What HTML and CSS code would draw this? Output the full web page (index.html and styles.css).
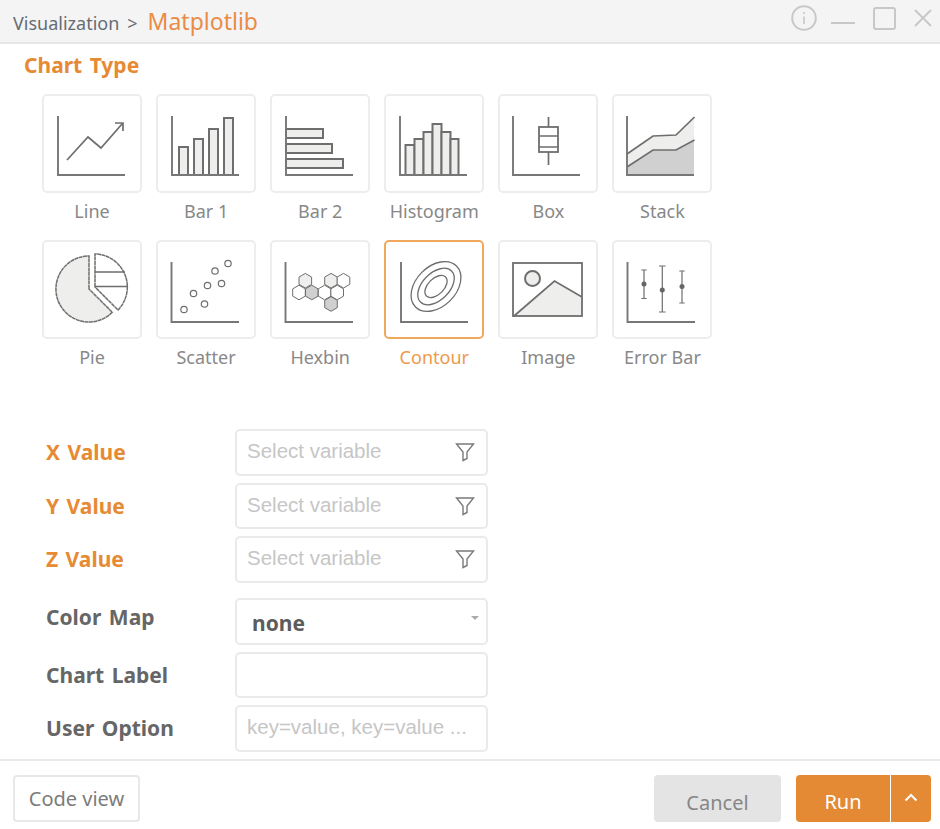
FILE: index.html
```html
<!doctype html>
<html lang="en">
<head>
    <meta charset="UTF-8">
    <title>Visualization - Matplotlib</title>
    <link rel="stylesheet" href="styles.css">
</head>
<body>
    <div class="dialog">
        <header class="titlebar">
            <div class="crumb">
                <span class="crumb-parent">Visualization</span>
                <span class="crumb-sep">&gt;</span>
                <span class="crumb-page">Matplotlib</span>
            </div>
            <div class="win-btns">
                <svg class="win-info" viewBox="0 0 26 26"><circle cx="13" cy="13" r="11.8"/><path class="thin" d="M13 11.5V19"/><path class="thin" d="M13 7V9"/></svg>
                <svg class="win-min" viewBox="0 0 24 4"><path d="M0 2H24"/></svg>
                <svg class="win-max" viewBox="0 0 23 23"><rect x="1" y="1" width="21" height="21" rx="2"/></svg>
                <svg class="win-close" viewBox="0 0 18 18"><path d="M1 1L17 17M17 1L1 17"/></svg>
            </div>
        </header>

        <main class="content">
            <h2 class="section-title">Chart Type</h2>
            <div class="chart-grid">
                <div class="chart-item">
                    <div class="chart-card">
                        <svg class="chart-icon" viewBox="0 0 100 98">
                            <path class="axis" d="M16 22V81H83"/>
                            <path class="line" d="M25 66L46 43L59 54L80 30M73 29H81V37"/>
                        </svg>
                    </div>
                    <span class="chart-name">Line</span>
                </div>
                <div class="chart-item">
                    <div class="chart-card">
                        <svg class="chart-icon" viewBox="0 0 100 98">
                            <rect class="soft" x="23" y="53" width="9" height="28"/>
                            <rect class="soft" x="38" y="45" width="9" height="36"/>
                            <rect class="soft" x="53" y="35" width="9" height="46"/>
                            <rect class="soft" x="68" y="24" width="9" height="57"/>
                            <path class="axis" d="M16 22V81H83"/>
                        </svg>
                    </div>
                    <span class="chart-name">Bar 1</span>
                </div>
                <div class="chart-item">
                    <div class="chart-card">
                        <svg class="chart-icon" viewBox="0 0 100 98">
                            <rect class="soft" x="16" y="35" width="37" height="9"/>
                            <rect class="soft" x="16" y="50" width="46" height="9"/>
                            <rect class="soft" x="16" y="65" width="57" height="9"/>
                            <path class="axis" d="M16 22V81H83"/>
                        </svg>
                    </div>
                    <span class="chart-name">Bar 2</span>
                </div>
                <div class="chart-item">
                    <div class="chart-card">
                        <svg class="chart-icon" viewBox="0 0 100 98">
                            <rect class="soft" x="21.5" y="51" width="9" height="30"/>
                            <rect class="soft" x="30.5" y="45" width="9" height="36"/>
                            <rect class="soft" x="39.5" y="38" width="9" height="43"/>
                            <rect class="soft" x="48.5" y="30" width="9" height="51"/>
                            <rect class="soft" x="57.5" y="38" width="9" height="43"/>
                            <rect class="soft" x="66.5" y="45" width="8" height="36"/>
                            <path class="axis" d="M16 22V81H83"/>
                        </svg>
                    </div>
                    <span class="chart-name">Histogram</span>
                </div>
                <div class="chart-item">
                    <div class="chart-card">
                        <svg class="chart-icon" viewBox="0 0 100 98">
                            <path class="axis" d="M15 22V81H82"/>
                            <path class="line" d="M50.5 23V33M50.5 58V71"/>
                            <rect class="plain" x="41" y="33" width="19" height="25"/>
                            <path class="line" d="M41 42H60M41 53H60"/>
                        </svg>
                    </div>
                    <span class="chart-name">Box</span>
                </div>
                <div class="chart-item">
                    <div class="chart-card">
                        <svg class="chart-icon" viewBox="0 0 100 98">
                            <path class="fill-light" d="M15 60L41 42L64 41L82 23V46L64 56H41L15 73Z"/>
                            <path class="fill-dark" d="M15 73L41 56H64L82 46V81H15Z"/>
                            <path class="line" d="M15 60L41 42L64 41L82.5 23M15 73L41 56H64L82.5 46"/>
                            <path class="axis" d="M15 22V81H82"/>
                        </svg>
                    </div>
                    <span class="chart-name">Stack</span>
                </div>

                <div class="chart-item">
                    <div class="chart-card">
                        <svg class="chart-icon" viewBox="0 0 100 98">
                            <path class="pie" d="M47 49V16A33 33 0 1 0 70.3 72.3Z"/>
                            <path class="pie-open" d="M53 47V14A33 33 0 0 1 76 70Z"/>
                            <path class="line" d="M53 32H83M53 46.5H86"/>
                        </svg>
                    </div>
                    <span class="chart-name">Pie</span>
                </div>
                <div class="chart-item">
                    <div class="chart-card">
                        <svg class="chart-icon" viewBox="0 0 100 98">
                            <path class="axis" d="M15.5 22V82H83"/>
                            <circle class="dot" cx="28" cy="69.5" r="3.2"/>
                            <circle class="dot" cx="37.5" cy="53.5" r="3.2"/>
                            <circle class="dot" cx="48.5" cy="64" r="3.2"/>
                            <circle class="dot" cx="51.5" cy="45.5" r="3.2"/>
                            <circle class="dot" cx="59" cy="31" r="3.2"/>
                            <circle class="dot" cx="65.5" cy="43.5" r="3.2"/>
                            <circle class="dot" cx="72" cy="23.5" r="3.2"/>
                        </svg>
                    </div>
                    <span class="chart-name">Scatter</span>
                </div>
                <div class="chart-item">
                    <div class="chart-card">
                        <svg class="chart-icon" viewBox="0 0 100 98">
                            <defs>
                                <polygon id="hex" points="0,-7.3 6.3,-3.65 6.3,3.65 0,7.3 -6.3,3.65 -6.3,-3.65"/>
                            </defs>
                            <path class="axis" d="M15.5 22V82H83"/>
                            <use class="hex-light" href="#hex" x="35.3" y="40.7"/>
                            <use class="hex-white" href="#hex" x="29" y="52.5"/>
                            <use class="hex-mid" href="#hex" x="41.8" y="52.5"/>
                            <use class="hex-white" href="#hex" x="54.6" y="52.5"/>
                            <use class="hex-white" href="#hex" x="67.2" y="52.5"/>
                            <use class="hex-light" href="#hex" x="61" y="40.7"/>
                            <use class="hex-white" href="#hex" x="73.5" y="40.7"/>
                            <use class="hex-mid" href="#hex" x="61" y="64"/>
                        </svg>
                    </div>
                    <span class="chart-name">Hexbin</span>
                </div>
                <div class="chart-item is-active">
                    <div class="chart-card">
                        <svg class="chart-icon" viewBox="0 0 100 98">
                            <path class="axis" d="M17 22V82H84"/>
                            <ellipse class="contour" cx="52" cy="46.5" rx="29" ry="20" transform="rotate(-45 52 46.5)"/>
                            <ellipse class="contour" cx="52" cy="46.5" rx="22" ry="13.5" transform="rotate(-45 52 46.5)"/>
                            <ellipse class="contour" cx="52" cy="46.5" rx="13.5" ry="8" transform="rotate(-45 52 46.5)"/>
                        </svg>
                    </div>
                    <span class="chart-name">Contour</span>
                </div>
                <div class="chart-item">
                    <div class="chart-card">
                        <svg class="chart-icon" viewBox="0 0 100 98">
                            <path class="fill-light" d="M16 76L56.5 41L84 57V76Z"/>
                            <path class="line" d="M16 76L56.5 41L84 57"/>
                            <circle class="soft" cx="34.5" cy="38.5" r="7.5"/>
                            <rect class="plain" x="15" y="23" width="69" height="53"/>
                        </svg>
                    </div>
                    <span class="chart-name">Image</span>
                </div>
                <div class="chart-item">
                    <div class="chart-card">
                        <svg class="chart-icon" viewBox="0 0 100 98">
                            <path class="axis" d="M15.5 22V82H83"/>
                            <path class="line-thin" d="M32 30V58.5M29.3 30H34.7M29.3 58.5H34.7"/>
                            <path class="line-thin" d="M50.3 26V72M47 26H53.6M47 72H53.6"/>
                            <path class="line-thin" d="M70 31V63M67.3 31H72.7M67.3 63H72.7"/>
                            <circle class="pin" cx="32" cy="44" r="2.5"/>
                            <circle class="pin" cx="50.3" cy="50" r="2.5"/>
                            <circle class="pin" cx="70" cy="46.5" r="2.5"/>
                        </svg>
                    </div>
                    <span class="chart-name">Error Bar</span>
                </div>
            </div>

            <div class="form-group form-required">
                <div class="form-row">
                    <label class="form-label">X Value</label>
                    <div class="field">
                        <span class="placeholder">Select variable</span>
                        <svg class="filter-icon" viewBox="0 0 20 20"><path d="M1.5 2H18.5L12 10V16.5L8 18.5V10Z"/></svg>
                    </div>
                </div>
                <div class="form-row">
                    <label class="form-label">Y Value</label>
                    <div class="field">
                        <span class="placeholder">Select variable</span>
                        <svg class="filter-icon" viewBox="0 0 20 20"><path d="M1.5 2H18.5L12 10V16.5L8 18.5V10Z"/></svg>
                    </div>
                </div>
                <div class="form-row">
                    <label class="form-label">Z Value</label>
                    <div class="field">
                        <span class="placeholder">Select variable</span>
                        <svg class="filter-icon" viewBox="0 0 20 20"><path d="M1.5 2H18.5L12 10V16.5L8 18.5V10Z"/></svg>
                    </div>
                </div>
            </div>

            <div class="form-group">
                <div class="form-row">
                    <label class="form-label label-raised">Color Map</label>
                    <div class="field field-select">
                        <span class="select-value">none</span>
                        <span class="select-caret"></span>
                    </div>
                </div>
                <div class="form-row">
                    <label class="form-label">Chart Label</label>
                    <div class="field"></div>
                </div>
                <div class="form-row">
                    <label class="form-label">User Option</label>
                    <div class="field">
                        <span class="placeholder">key=value, key=value ...</span>
                    </div>
                </div>
            </div>
        </main>

        <footer class="actions">
            <button class="btn btn-code">Code view</button>
            <div class="actions-right">
                <button class="btn btn-cancel">Cancel</button>
                <div class="run-group">
                    <button class="btn btn-run">Run</button>
                    <button class="btn btn-more">
                        <svg viewBox="0 0 14 9"><path d="M1.5 7.5L7 2L12.5 7.5"/></svg>
                    </button>
                </div>
            </div>
        </footer>
    </div>
</body>
</html>
```

FILE: styles.css
```css
* {
    margin: 0;
    padding: 0;
    box-sizing: border-box;
}

body {
    background: #fff;
    font-family: "Noto Sans", "Liberation Sans", sans-serif;
    overflow: hidden;
}

.dialog {
    width: 940px;
    height: 829px;
    display: flex;
    flex-direction: column;
}

/* title bar */
.titlebar {
    height: 44px;
    flex: none;
    display: flex;
    justify-content: space-between;
    align-items: center;
    padding: 0 8px 0 13px;
    background: #f4f4f4;
    border-bottom: 2px solid #e6e6e6;
}

.crumb {
    display: flex;
    align-items: baseline;
    gap: 8px;
}

.crumb-parent,
.crumb-sep {
    font-size: 18px;
    color: #666c74;
}

.crumb-page {
    margin-left: 2px;
    font-size: 23px;
    color: #e98c46;
}

.win-btns {
    display: flex;
    align-items: center;
    margin-top: -6px;
}

.win-btns svg {
    display: block;
    fill: none;
    stroke: #c8c8c8;
    stroke-width: 2;
}

.win-btns .thin {
    stroke-width: 1.6;
}

.win-info {
    width: 26px;
    height: 26px;
}

.win-min {
    width: 24px;
    height: 4px;
    margin: 10px 0 0 14.5px;
}

.win-max {
    width: 23px;
    height: 23px;
    margin-left: 18px;
}

.win-close {
    width: 18px;
    height: 18px;
    margin-left: 18px;
}

/* chart type picker */
.content {
    flex: 1;
    min-height: 0;
    padding-top: 6px;
}

.section-title {
    padding-left: 24px;
    font-size: 21px;
    line-height: 30px;
    font-weight: 700;
    word-spacing: 2px;
    color: #e68a34;
}

.chart-grid {
    display: grid;
    grid-template-columns: repeat(6, 100px);
    column-gap: 14.1px;
    row-gap: 16.5px;
    margin: 13.5px 0 60px 42px;
}

.chart-item {
    display: flex;
    flex-direction: column;
    align-items: center;
}

.chart-card {
    width: 100px;
    height: 99px;
    border: 2px solid #ededed;
    border-radius: 5px;
    background: #fff;
}

.chart-icon {
    display: block;
    width: 100px;
    height: 98px;
    margin: -1.5px -2px -2px;
    fill: none;
}

.chart-name {
    margin-top: 6.5px;
    font-size: 18px;
    line-height: 24px;
    color: #888;
}

.is-active .chart-card {
    border-color: #f0a95c;
}

.is-active .chart-name {
    color: #ee9a4c;
}

.axis {
    fill: none;
    stroke: #777;
    stroke-width: 1.9;
}

.line {
    fill: none;
    stroke: #6e6e6e;
    stroke-width: 1.7;
}

.line-thin {
    fill: none;
    stroke: #6e6e6e;
    stroke-width: 1.2;
}

.plain {
    fill: none;
    stroke: #6e6e6e;
    stroke-width: 1.8;
}

.contour {
    fill: none;
    stroke: #6e6e6e;
    stroke-width: 1.3;
}

.soft {
    fill: #eeeeec;
    stroke: #6e6e6e;
    stroke-width: 2;
}

.fill-light {
    fill: #eeeeec;
}

.fill-dark {
    fill: #d0d0d0;
}

.pie {
    fill: #eeeeec;
    stroke: #6e6e6e;
    stroke-width: 1.5;
    stroke-dasharray: 4 0.4;
}

.pie-open {
    fill: #fff;
    stroke: #6e6e6e;
    stroke-width: 1.5;
    stroke-dasharray: 4 0.4;
}

.dot {
    fill: #fff;
    stroke: #6e6e6e;
    stroke-width: 1.2;
}

.pin {
    fill: #666;
}

.hex-white,
.hex-light,
.hex-mid {
    stroke: #6e6e6e;
    stroke-width: 1;
}

.hex-white {
    fill: #fff;
}

.hex-light {
    fill: #eeeeec;
}

.hex-mid {
    fill: #d0d0d0;
}

/* form */
.form-group {
    display: flex;
    flex-direction: column;
    gap: 7px;
    padding-left: 46px;
}

.form-group + .form-group {
    margin-top: 15.5px;
}

.form-row {
    display: flex;
    align-items: center;
    height: 46.5px;
}

.form-label {
    width: 189px;
    font-size: 21px;
    font-weight: 700;
    word-spacing: 2px;
    color: #666;
}

.label-raised {
    margin-top: -8px;
}

.form-required .form-label {
    color: #e68a34;
}

.field {
    position: relative;
    width: 253px;
    height: 46.5px;
    display: flex;
    align-items: center;
    justify-content: space-between;
    padding: 0 11px 0 10px;
    border: 2px solid #eaeaea;
    border-radius: 5px;
    background: #fff;
}

.placeholder {
    font-family: "Liberation Sans", Arial, sans-serif;
    font-size: 20.5px;
    color: #c6c6c6;
    white-space: nowrap;
    margin-top: -2px;
}

.filter-icon {
    width: 20px;
    height: 20px;
    fill: none;
    stroke: #7a7a7a;
    stroke-width: 1.4;
}

.select-value {
    margin: 4px 0 0 5px;
    font-size: 21px;
    font-weight: 700;
    color: #5c5c5c;
}

.select-caret {
    position: absolute;
    top: 16px;
    right: 7px;
    border: 4px solid transparent;
    border-top: 4px solid #aaa;
    border-bottom: 0;
}

/* footer */
.actions {
    height: 70px;
    flex: none;
    display: flex;
    justify-content: space-between;
    padding: 14px 9px 0 13px;
    border-top: 2px solid #ebebeb;
}

.actions-right {
    display: flex;
    gap: 15px;
}

.run-group {
    display: flex;
    gap: 1px;
}

.btn {
    height: 47px;
    border: 0;
    border-radius: 4px;
    font-family: "Noto Sans", "Liberation Sans", sans-serif;
    font-size: 20px;
}

.btn-code {
    width: 127px;
    background: #fff;
    border: 2px solid #e8e8e8;
    color: #7c7c7c;
}

.btn-cancel {
    width: 127px;
    padding-top: 7px;
    background: #e4e4e4;
    color: #868686;
}

.btn-run {
    width: 94px;
    padding-top: 5px;
    border-radius: 4px 0 0 4px;
    background: #e48a34;
    color: #fff;
}

.btn-more {
    width: 40px;
    border-radius: 0 4px 4px 0;
    background: #e48a34;
}

.btn-more svg {
    display: block;
    width: 14px;
    height: 9px;
    margin: -2px auto 0;
    fill: none;
    stroke: #fff;
    stroke-width: 2;
}
```
